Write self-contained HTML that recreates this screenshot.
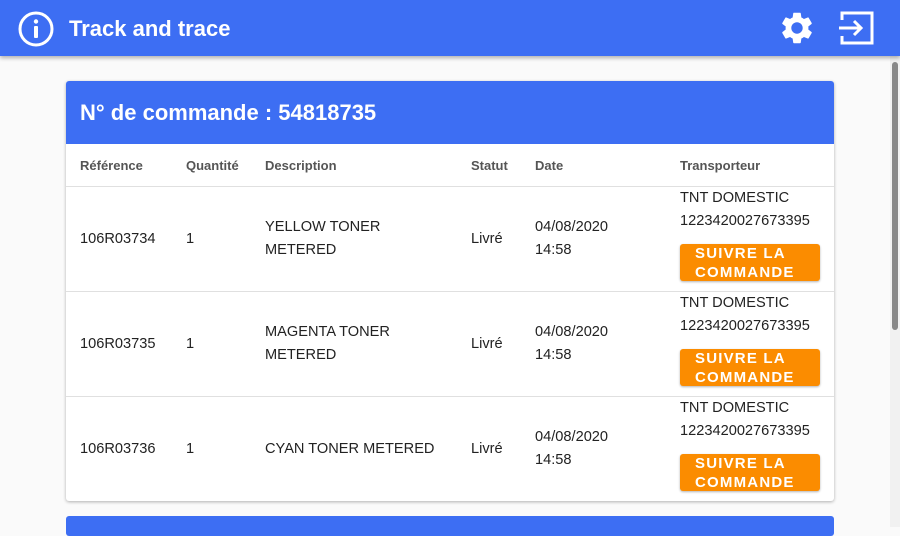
<!DOCTYPE html>
<html><head><meta charset="utf-8"><style>
*{margin:0;padding:0;box-sizing:border-box}
body{width:900px;height:527px;overflow:hidden;background:#fafafa;font-family:"Liberation Sans",Arial,sans-serif;position:relative;color:#222}
.top{position:absolute;left:0;top:0;width:900px;height:56px;background:#3d6ef3;box-shadow:0 2px 4px rgba(0,0,0,.3);z-index:2}
.top .t{position:absolute;left:69px;top:16px;color:#fff;font-weight:bold;font-size:22px}
.sb{position:absolute;right:0;top:56px;width:10px;height:471px;background:#f1f1f1}
.sb div{position:absolute;left:2px;top:6px;width:6px;height:268px;background:#888;border-radius:3px}
.card{position:absolute;left:66px;top:81px;width:768px;height:420px;background:#fff;box-shadow:0 1px 3px rgba(0,0,0,.3);border-radius:3px;overflow:hidden}
.ch{height:63px;background:#3d6ef3;color:#fff;font-weight:bold;font-size:22px;padding:19px 0 0 14px}
.hd{height:43px;border-bottom:1px solid #e0e0e0;position:relative;font-size:13px;font-weight:bold;color:#555}
.hd span{position:absolute;top:14px}
.row{height:105px;border-bottom:1px solid #e0e0e0;position:relative;font-size:14.6px;color:#222}
.row span{position:absolute;line-height:23px}
.btn{position:absolute;left:614px;top:57px;width:140px;height:37px;background:#fb8c00;border-radius:3px;color:#fff;font-size:15px;font-weight:bold;letter-spacing:1.2px;line-height:19px;padding:0 0 0 15px;box-shadow:0 1px 2px rgba(0,0,0,.3)}
.c2{position:absolute;left:66px;top:516px;width:768px;height:20px;background:#3d6ef3;border-radius:3px}
</style></head><body>
<div class="top">
<svg style="position:absolute;left:17px;top:11px" width="38" height="36" viewBox="0 0 38 36"><circle cx="19" cy="18" r="16" fill="none" stroke="#fff" stroke-width="3"/><circle cx="19" cy="10.5" r="2.2" fill="#fff"/><rect x="17" y="15" width="4" height="12" rx="1" fill="#fff"/></svg>
<div class="t">Track and trace</div>
<svg style="position:absolute;left:778px;top:9px" width="38" height="38" viewBox="0 0 24 24"><path fill="#fff" d="M19.14 12.94c.04-.3.06-.61.06-.94 0-.32-.02-.64-.07-.94l2.030-1.58a.49.49 0 0 0 .12-.61l-1.92-3.32a.488.488 0 0 0-.59-.22l-2.39.96c-.5-.38-1.03-.7-1.62-.94l-.36-2.54a.484.484 0 0 0-.48-.41h-3.840c-.24 0-.43.17-.47.41l-.36 2.54c-.59.24-1.130.57-1.62.94l-2.39-.96c-.22-.08-.47 0-.59.22L2.74 8.87c-.12.21-.08.47.12.61l2.03 1.58c-.05.3-.09.63-.09.94s.02.64.07.94l-2.03 1.58a.49.49 0 0 0-.12.61l1.92 3.32c.12.22.37.29.59.22l2.39-.96c.5.38 1.03.7 1.62.94l.36 2.54c.05.24.24.41.48.41h3.84c.24 0 .44-.17.47-.41l.36-2.54c.59-.24 1.13-.56 1.62-.94l2.39.96c.22.08.47 0 .59-.22l1.92-3.32c.12-.22.07-.47-.12-.61l-2.01-1.58zM12 15.6c-1.98 0-3.6-1.62-3.6-3.6s1.62-3.6 3.6-3.6 3.6 1.62 3.6 3.6-1.62 3.6-3.6 3.6z"/></svg>
<svg style="position:absolute;left:838px;top:10px" width="38" height="36" viewBox="0 0 38 36"><path d="M4 10V3h30v30H4v-7" fill="none" stroke="#fff" stroke-width="3"/><path d="M1 18h22M16 11l7 7-7 7" fill="none" stroke="#fff" stroke-width="3"/></svg>
</div>
<div class="sb"><div></div></div>
<div class="card">
<div class="ch">N° de commande : 54818735</div>
<div class="hd"><span style="left:14px">Référence</span><span style="left:120px">Quantité</span><span style="left:199px">Description</span><span style="left:405px">Statut</span><span style="left:469px">Date</span><span style="left:614px">Transporteur</span></div>
<div class="row"><span style="left:14px;top:41px">106R03734</span><span style="left:120px;top:41px">1</span><span style="left:199px;top:29px">YELLOW TONER<br>METERED</span><span style="left:405px;top:41px">Livré</span><span style="left:469px;top:29px">04/08/2020<br>14:58</span><span style="left:614px;top:0">TNT DOMESTIC<br>1223420027673395</span><div class="btn">SUIVRE LA<br>COMMANDE</div></div>
<div class="row"><span style="left:14px;top:41px">106R03735</span><span style="left:120px;top:41px">1</span><span style="left:199px;top:29px">MAGENTA TONER<br>METERED</span><span style="left:405px;top:41px">Livré</span><span style="left:469px;top:29px">04/08/2020<br>14:58</span><span style="left:614px;top:0">TNT DOMESTIC<br>1223420027673395</span><div class="btn">SUIVRE LA<br>COMMANDE</div></div>
<div class="row" style="border:none"><span style="left:14px;top:41px">106R03736</span><span style="left:120px;top:41px">1</span><span style="left:199px;top:41px">CYAN TONER METERED</span><span style="left:405px;top:41px">Livré</span><span style="left:469px;top:29px">04/08/2020<br>14:58</span><span style="left:614px;top:0">TNT DOMESTIC<br>1223420027673395</span><div class="btn">SUIVRE LA<br>COMMANDE</div></div>
</div>
<div class="c2"></div>
</body></html>
